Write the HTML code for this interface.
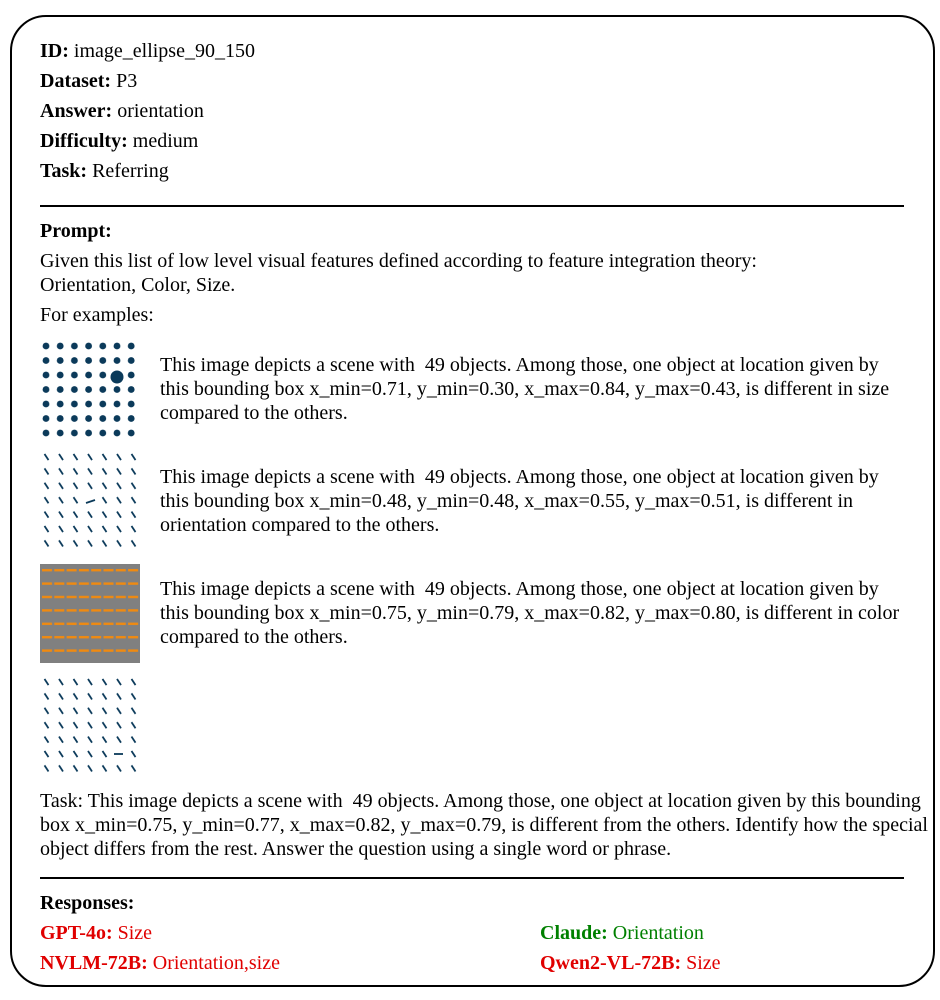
<!DOCTYPE html>
<html><head><meta charset="utf-8"><style>
body{margin:0;background:#fff;width:940px;height:1000px;position:relative;overflow:hidden;font-family:"Liberation Serif",serif;font-size:20px;color:#000}
.t{position:absolute;left:40px;line-height:24px;white-space:nowrap;margin-top:1px}
.box{position:absolute;left:10px;top:15px;width:921px;height:968px;border:2px solid #000;border-radius:36px}
.hr{position:absolute;left:40px;width:864px;height:2px;background:#000}
.r{color:#e00000}.g{color:#008000}
svg{position:absolute}
</style></head><body>
<div class="box"></div>
<div class="t" style="top:38px"><b>ID:</b> image_ellipse_90_150</div>
<div class="t" style="top:68px"><b>Dataset:</b> P3</div>
<div class="t" style="top:98px"><b>Answer:</b> orientation</div>
<div class="t" style="top:128px"><b>Difficulty:</b> medium</div>
<div class="t" style="top:158px"><b>Task:</b> Referring</div>
<div class="hr" style="top:205px"></div>
<div class="t" style="top:218px"><b>Prompt:</b></div>
<div class="t" style="top:248px">Given this list of low level visual features defined according to feature integration theory:</div>
<div class="t" style="top:272px">Orientation, Color, Size.</div>
<div class="t" style="top:302px">For examples:</div>

<svg style="left:0;top:0" width="940" height="1000">
<defs>
<pattern id="p1" x="39.5" y="339" width="14.2" height="14.5" patternUnits="userSpaceOnUse"><circle cx="6.5" cy="7" r="3.4" fill="#0b3a5a"/></pattern>
<pattern id="p2" x="40" y="450" width="14.5" height="14.4" patternUnits="userSpaceOnUse"><line x1="4.5" y1="4" x2="8.5" y2="10" stroke="#0b3a5a" stroke-width="1.8"/></pattern>
<pattern id="p3" x="41" y="565" width="12.3" height="13.4" patternUnits="userSpaceOnUse"><rect x="1" y="4" width="10" height="2.4" fill="#f08a10"/></pattern>
<pattern id="p4" x="40" y="675" width="14.5" height="14.4" patternUnits="userSpaceOnUse"><line x1="4.5" y1="4" x2="8.5" y2="10" stroke="#0b3a5a" stroke-width="1.8"/></pattern>
</defs>
<rect x="39.5" y="339" width="99.4" height="101.5" fill="url(#p1)"/>
<circle cx="117" cy="377" r="6.5" fill="#0b3a5a"/>
<rect x="40" y="450" width="101.5" height="100.8" fill="url(#p2)"/>
<rect x="84" y="494" width="14" height="14" fill="#fff"/>
<line x1="86" y1="503" x2="95" y2="500" stroke="#0b3a5a" stroke-width="1.8"/>
<rect x="40" y="564" width="100" height="99" fill="#808080"/>
<rect x="41" y="565" width="98" height="94" fill="url(#p3)"/>
<rect x="40" y="675" width="101.5" height="100.8" fill="url(#p4)"/>
<rect x="112" y="748" width="14" height="14" fill="#fff"/>
<line x1="114" y1="754" x2="123" y2="754" stroke="#0b3a5a" stroke-width="1.8"/>
</svg>

<div class="t" style="left:160px;top:352px">This image depicts a scene with&nbsp; 49 objects. Among those, one object at location given by</div>
<div class="t" style="left:160px;top:376px">this bounding box x_min=0.71, y_min=0.30, x_max=0.84, y_max=0.43, is different in size</div>
<div class="t" style="left:160px;top:400px">compared to the others.</div>
<div class="t" style="left:160px;top:464px">This image depicts a scene with&nbsp; 49 objects. Among those, one object at location given by</div>
<div class="t" style="left:160px;top:488px">this bounding box x_min=0.48, y_min=0.48, x_max=0.55, y_max=0.51, is different in</div>
<div class="t" style="left:160px;top:512px">orientation compared to the others.</div>
<div class="t" style="left:160px;top:576px">This image depicts a scene with&nbsp; 49 objects. Among those, one object at location given by</div>
<div class="t" style="left:160px;top:600px">this bounding box x_min=0.75, y_min=0.79, x_max=0.82, y_max=0.80, is different in color</div>
<div class="t" style="left:160px;top:624px">compared to the others.</div>

<div class="t" style="top:788px">Task: This image depicts a scene with&nbsp; 49 objects. Among those, one object at location given by this bounding</div>
<div class="t" style="top:812px">box x_min=0.75, y_min=0.77, x_max=0.82, y_max=0.79, is different from the others. Identify how the special</div>
<div class="t" style="top:836px">object differs from the rest. Answer the question using a single word or phrase.</div>
<div class="hr" style="top:877px"></div>
<div class="t" style="top:890px"><b>Responses:</b></div>
<div class="t r" style="top:920px"><b>GPT-4o:</b> Size</div>
<div class="t r" style="top:950px"><b>NVLM-72B:</b> Orientation,size</div>
<div class="t g" style="left:540px;top:920px"><b>Claude:</b> Orientation</div>
<div class="t r" style="left:540px;top:950px"><b>Qwen2-VL-72B:</b> Size</div>
</body></html>
